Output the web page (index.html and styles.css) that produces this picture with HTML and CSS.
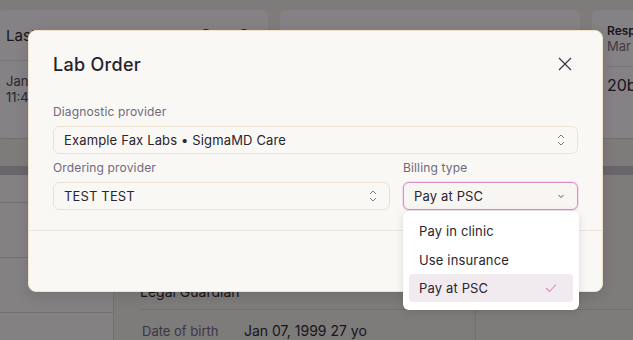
FILE: index.html
```html
<!DOCTYPE html>
<html lang="en">
<head>
    <meta charset="UTF-8">
    <meta name="viewport" content="width=device-width, initial-scale=1.0">
    <title>Lab Order</title>
    <link rel="stylesheet" href="styles.css">
</head>
<body>
    <!-- Page behind the modal -->
    <div class="page">
        <div class="card-row">
            <div class="card card-first">
                <div class="card-head">
                    <span class="card-title">Last results</span>
                    <span class="card-icons"><i></i><i></i></span>
                </div>
                <div class="card-body">
                    <p>Jan 07, 2025</p>
                    <p>11:45 AM</p>
                </div>
            </div>
            <div class="card card-mid"></div>
            <div class="card card-last">
                <div class="card-head small">
                    <span class="card-title">Response</span>
                    <span class="card-sub">Mar 12</span>
                </div>
                <div class="card-body">
                    <p class="big">20b</p>
                </div>
            </div>
        </div>
        <div class="band"></div>
        <div class="bottom">
            <div class="side">
                <div class="side-row first"></div>
                <div class="side-row"></div>
                <div class="side-row"></div>
            </div>
            <div class="details">
                <div class="detail-row guardian">
                    <span class="detail-value">Legal Guardian</span>
                </div>
                <div class="detail-row split">
                    <span class="detail-label">Date of birth</span>
                    <span class="detail-value">Jan 07, 1999 27 yo</span>
                    <span class="detail-side"></span>
                </div>
            </div>
        </div>
    </div>

    <div class="overlay"></div>

    <div class="modal">
        <div class="modal-header">
            <h2>Lab Order</h2>
            <button class="close-btn" aria-label="Close">
                <svg width="14" height="14" viewBox="0 0 14 14"><path d="M1 1L13 13M13 1L1 13" stroke="#3a3642" stroke-width="1.2" fill="none"/></svg>
            </button>
        </div>
        <div class="modal-body">
            <div class="field">
                <label>Diagnostic provider</label>
                <div class="select">
                    <span>Example Fax Labs • SigmaMD Care</span>
                    <svg class="updown" width="10" height="14" viewBox="0 0 10 14"><path d="M2 5L5 2L8 5M2 9L5 12L8 9" stroke="#7a7682" stroke-width="1" fill="none"/></svg>
                </div>
            </div>
            <div class="field-row">
                <div class="field grow">
                    <label>Ordering provider</label>
                    <div class="select">
                        <span>TEST TEST</span>
                        <svg class="updown" width="10" height="14" viewBox="0 0 10 14"><path d="M2 5L5 2L8 5M2 9L5 12L8 9" stroke="#7a7682" stroke-width="1" fill="none"/></svg>
                    </div>
                </div>
                <div class="field billing">
                    <label>Billing type</label>
                    <div class="select focused">
                        <span>Pay at PSC</span>
                        <svg width="10" height="8" viewBox="0 0 10 8"><path d="M2.5 3L5 5.5L7.5 3" stroke="#5a5662" stroke-width="1" fill="none"/></svg>
                    </div>
                </div>
            </div>
        </div>
        <div class="modal-footer"></div>
    </div>

    <ul class="dropdown">
        <li>Pay in clinic</li>
        <li>Use insurance</li>
        <li class="selected">Pay at PSC
            <svg width="12" height="10" viewBox="0 0 12 10"><path d="M1 5L4.5 8.5L11 1.5" stroke="#d28ac8" stroke-width="1.1" fill="none"/></svg>
        </li>
    </ul>
</body>
</html>
```

FILE: styles.css
```css
* {
    margin: 0;
    padding: 0;
    box-sizing: border-box;
}

body {
    width: 633px;
    height: 340px;
    overflow: hidden;
    background: #f2f0ec;
    font-family: 'Inter', 'Noto Sans', sans-serif;
    color: #2a2630;
    position: relative;
}

/* Page behind */
.page {
    padding-top: 10px;
}

.card-row {
    display: flex;
    gap: 12px;
    height: 128px;
}

.card {
    background: #fff;
    border-radius: 6px;
    flex-shrink: 0;
    overflow: hidden;
}

.card-first {
    width: 270px;
    margin-left: -2px;
}

.card-mid {
    width: 300px;
}

.card-last {
    width: 120px;
    padding-left: 15px;
}

.card-head {
    height: 51px;
    display: flex;
    align-items: center;
    justify-content: space-between;
    padding: 0 18px 0 8px;
    border-bottom: 1px solid #e6e2dc;
}

.card-title {
    font-size: 15px;
}

.card-icons {
    display: flex;
    gap: 26px;
}

.card-icons i {
    width: 12px;
    height: 12px;
    border: 1.5px solid #333;
    border-radius: 50%;
}

.card-body {
    padding: 12px 8px;
    font-size: 13px;
    color: #4a4652;
    line-height: 16px;
}

.card-head.small {
    height: 57px;
    flex-direction: column;
    align-items: flex-start;
    justify-content: center;
    padding: 0;
}

.card-head.small .card-title {
    font-size: 12px;
    font-weight: 600;
}

.card-sub {
    font-size: 13px;
    color: #77737f;
}

.card-last .card-body {
    padding: 10px 0;
}

.big {
    font-size: 16px;
    color: #2a2630;
}

.band {
    height: 37px;
    border-top: 1px solid #d9d6d0;
    border-bottom: 9px solid #c9c6cc;
}

.bottom {
    display: flex;
    height: 200px;
}

.side {
    width: 114px;
    border-right: 1px solid #dedad4;
    background: #fdfcfa;
}

.side-row {
    height: 55px;
    border-bottom: 1px solid #dedad4;
}

.side-row.first {
    height: 28px;
}

.details {
    flex: 1;
    padding-left: 26px;
    padding-top: 107px;
}

.detail-row {
    height: 27px;
    font-size: 14px;
    display: flex;
    align-items: center;
}

.detail-row.guardian {
    padding-bottom: 9px;
}

.detail-row.split {
    border-top: 1px solid #dedad4;
    height: 42px;
    align-items: stretch;
}

.detail-label,
.detail-value {
    display: flex;
    align-items: center;
}

.detail-label {
    width: 104px;
    padding-left: 2px;
    font-size: 13px;
    color: #6e6a7c;
}

.detail-row.split .detail-value {
    width: 232px;
    border-right: 1px solid #dedad4;
}

/* Overlay */
.overlay {
    position: absolute;
    inset: 0;
    background: rgba(10, 6, 10, 0.5);
}

/* Modal */
.modal {
    position: absolute;
    left: 28px;
    top: 30px;
    width: 575px;
    height: 262px;
    background: #f9f8f5;
    border: 1px solid #efe3cf;
    border-radius: 8px;
    box-shadow: 0 4px 14px rgba(0, 0, 0, 0.12);
    display: flex;
    flex-direction: column;
}

.modal-header {
    height: 68px;
    display: flex;
    align-items: center;
    justify-content: space-between;
    padding: 0 30px 2px 24px;
}

.modal-header h2 {
    font-size: 18px;
    font-weight: 500;
    letter-spacing: 0.3px;
    color: #26222c;
}

.close-btn {
    background: none;
    border: none;
    display: flex;
}

.modal-body {
    padding: 5px 24px 0;
    display: flex;
    flex-direction: column;
    gap: 6px;
    height: 132px;
    border-bottom: 1px solid #e9e4db;
}

.field label {
    display: block;
    font-size: 12px;
    letter-spacing: 0.15px;
    color: #6e6a7c;
    margin-bottom: 6px;
    line-height: 16px;
}

.field-row {
    display: flex;
    gap: 13px;
}

.field.grow {
    flex: 1;
}

.field.billing {
    width: 175px;
}

.select {
    height: 28px;
    border: 1px solid #ede3d2;
    border-radius: 6px;
    background: #faf8f4;
    display: flex;
    align-items: center;
    justify-content: space-between;
    padding: 0 11px 0 10px;
    font-size: 13px;
    letter-spacing: 0.15px;
    color: #2a2630;
}

.select.focused {
    border-color: #d690cb;
    box-shadow: 0 0 0 1px #f3dcef;
    background: #f8f6f3;
}

/* Dropdown */
.dropdown {
    position: absolute;
    left: 403px;
    top: 211px;
    width: 176px;
    height: 99px;
    background: #fff;
    border-radius: 6px;
    box-shadow: 0 2px 8px rgba(0, 0, 0, 0.12);
    list-style: none;
    padding: 5px 6px;
}

.dropdown li {
    height: 29px;
    display: flex;
    align-items: center;
    justify-content: space-between;
    padding: 0 16px 0 10px;
    font-size: 13px;
    letter-spacing: 0.15px;
    color: #2a2630;
    border-radius: 4px;
}

.dropdown li.selected {
    background: #f1ebef;
    height: 28px;
}
```
